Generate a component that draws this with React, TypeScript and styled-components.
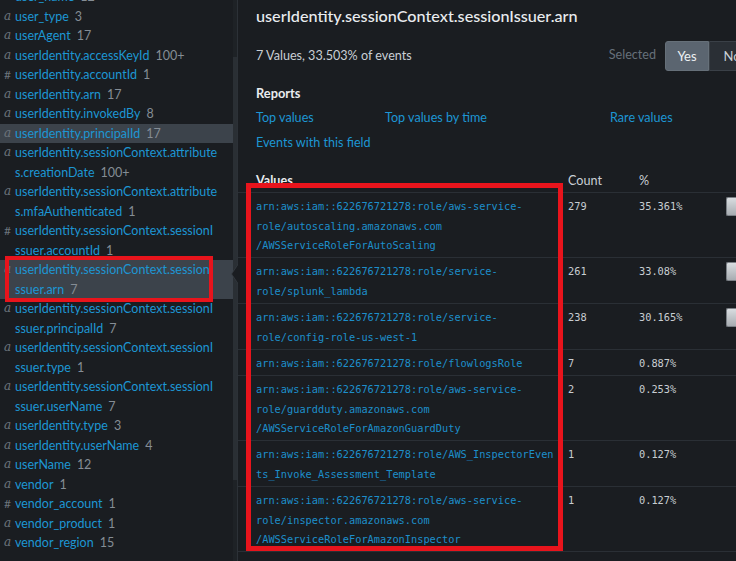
import React from "react";
import styled, { createGlobalStyle } from "styled-components";

const GlobalStyle = createGlobalStyle`
  *, *::before, *::after { box-sizing: border-box; }
  html, body { margin: 0; padding: 0; background: #1a1d21; overflow: hidden; }
  body { font-family: Lato, "Open Sans", sans-serif; }
`;

const SANS = `Lato, "Open Sans", sans-serif`;
const MONO = `"DejaVu Sans Mono", "Liberation Mono", monospace`;
const LINK = "#1d96d3";

const Page = styled.div`
  display: flex;
  width: 736px;
  height: 561px;
  overflow: hidden;
  background: #1a1d21;
`;

/* ---------- sidebar ---------- */
const Sidebar = styled.aside`
  position: relative;
  flex: 0 0 237px;
  display: flex;
  overflow: hidden;
`;

const FieldList = styled.ul`
  list-style: none;
  margin: -13px 0 0;
  padding: 0;
  flex: 1;
`;

const FieldRow = styled.li<{ $active?: boolean }>`
  display: grid;
  grid-template-columns: 15px 1fr;
  font-family: ${SANS};
  font-size: 12.5px;
  line-height: 19.5px;
  background: ${(p) => (p.$active ? "#3c434b" : "transparent")};
`;

const TypeIcon = styled.span<{ $numeric?: boolean }>`
  padding-left: 4px;
  color: #6c747c;
  font-family: ${(p) => (p.$numeric ? SANS : `"DejaVu Serif", serif`)};
  font-style: ${(p) => (p.$numeric ? "normal" : "italic")};
  font-size: 12px;
`;

const FieldText = styled.span`
  white-space: nowrap;
  color: ${LINK};
`;

const FieldCount = styled.span`
  color: #858d95;
  margin-left: 6px;
`;

const ScrollTrack = styled.div`
  flex: 0 0 4px;
  padding-top: 57px;
  background: #1e2226;
`;

const ScrollThumb = styled.div`
  height: 423px;
  background: #2a2f34;
`;

/* ---------- main ---------- */
const Main = styled.main`
  position: relative;
  flex: 0 0 541px;
  border-left: 1px solid #2c3137;
  color: #c3c9cf;
  font-family: ${SANS};
  font-size: 12.6px;
`;

const PopoverArrow = styled.span`
  position: absolute;
  left: -7px;
  top: 264px;
  width: 7px;
  height: 20px;
  &::before,
  &::after {
    content: "";
    position: absolute;
    width: 0;
    height: 0;
    border-style: solid;
    border-color: transparent;
  }
  &::before {
    left: 0;
    top: 0;
    border-width: 10px 7px 10px 0;
    border-right-color: #353b42;
  }
  &::after {
    left: 1px;
    top: 1px;
    border-width: 9px 6px 9px 0;
    border-right-color: #1a1d21;
  }
`;

const Head = styled.section`
  padding: 4px 18px 0;
`;

const Title = styled.h1`
  margin: 0;
  font-size: 16.2px;
  line-height: 24px;
  font-weight: 500;
  color: #e9ecef;
`;

const StatsRow = styled.div`
  display: flex;
  align-items: center;
  justify-content: space-between;
  height: 30px;
  margin-top: 13px;
`;

const StatsText = styled.span`
  color: #c9cfd5;
  margin-top: -1px;
`;

const SelectedBox = styled.div`
  display: flex;
  align-items: center;
  margin-right: 5px;
`;

const SelectedLabel = styled.span`
  color: #66707a;
  margin-right: 9px;
  margin-top: -3px;
`;

const ToggleButton = styled.button<{ $on?: boolean }>`
  height: 30px;
  width: ${(p) => (p.$on ? "44px" : "46px")};
  padding: 0;
  font-family: ${SANS};
  font-size: 13px;
  color: ${(p) => (p.$on ? "#eef1f3" : "#c9cfd5")};
  background: ${(p) => (p.$on ? "#5b6570" : "#2a2f35")};
  border: 1px solid ${(p) => (p.$on ? "#667079" : "#3a4047")};
  border-radius: ${(p) => (p.$on ? "3px 0 0 3px" : "0 3px 3px 0")};
`;

const SectionHeading = styled.h2`
  margin: 13px 0 0;
  font-size: 12.8px;
  line-height: 19.5px;
  font-weight: 700;
  color: #e9ecef;
`;

const LinkGrid = styled.div`
  display: grid;
  grid-template-columns: 129px 225px auto;
  grid-auto-rows: 25px;
  align-items: center;
  margin-top: 1px;
`;

const ReportLink = styled.a`
  color: ${LINK};
  text-decoration: none;
  white-space: nowrap;
`;

const Table = styled.div`
  margin-top: 15px;
`;

const TableRow = styled.div<{ $header?: boolean }>`
  display: grid;
  grid-template-columns: 330px 71px 87px 1fr;
  border-bottom: 1px solid #2a2f35;
  line-height: 19.5px;
  padding: ${(p) => (p.$header ? "1px 0 2px" : "4px 0 1.75px")};
`;

const HeadCell = styled.div<{ $bold?: boolean; $first?: boolean }>`
  padding-left: ${(p) => (p.$first ? "18px" : "0")};
  font-weight: ${(p) => (p.$bold ? 700 : 400)};
  color: ${(p) => (p.$bold ? "#e9ecef" : "#c9cfd5")};
`;

const ValueCell = styled.div`
  padding-left: 18px;
  font-family: ${MONO};
  font-size: 10.3px;
  color: #1d8fcb;
  white-space: nowrap;
`;

const NumCell = styled.div`
  font-family: ${MONO};
  font-size: 10.3px;
  color: #c8cdd2;
`;

const BarCell = styled.div`
  overflow: hidden;
`;

const Bar = styled.div`
  height: 19px;
  background: linear-gradient(#d9dde0, #a7acb1);
  border: 1px solid #7b8086;
  border-right: none;
  border-radius: 2px 0 0 2px;
`;

const Annotation = styled.div<{ $w: number }>`
  position: absolute;
  border: ${(p) => p.$w}px solid #e8141c;
  pointer-events: none;
`;

/* ---------- data ---------- */
type Field = { numeric?: boolean; lines: string[]; count: string; active?: boolean };

const SESS = "userIdentity.sessionContext.sessionI";
const ATTR = "userIdentity.sessionContext.attribute";

const fields: Field[] = [
  { lines: ["user_name"], count: "12" },
  { lines: ["user_type"], count: "3" },
  { lines: ["userAgent"], count: "17" },
  { lines: ["userIdentity.accessKeyId"], count: "100+" },
  { numeric: true, lines: ["userIdentity.accountId"], count: "1" },
  { lines: ["userIdentity.arn"], count: "17" },
  { lines: ["userIdentity.invokedBy"], count: "8" },
  { lines: ["userIdentity.principalId"], count: "17", active: true },
  { lines: [ATTR, "s.creationDate"], count: "100+" },
  { lines: [ATTR, "s.mfaAuthenticated"], count: "1" },
  { numeric: true, lines: [SESS, "ssuer.accountId"], count: "1" },
  { lines: [SESS, "ssuer.arn"], count: "7", active: true },
  { lines: [SESS, "ssuer.principalId"], count: "7" },
  { lines: [SESS, "ssuer.type"], count: "1" },
  { lines: [SESS, "ssuer.userName"], count: "7" },
  { lines: ["userIdentity.type"], count: "3" },
  { lines: ["userIdentity.userName"], count: "4" },
  { lines: ["userName"], count: "12" },
  { lines: ["vendor"], count: "1" },
  { numeric: true, lines: ["vendor_account"], count: "1" },
  { lines: ["vendor_product"], count: "1" },
  { lines: ["vendor_region"], count: "15" },
];

const ARN = "arn:aws:iam::622676721278:role/";

const values: { lines: string[]; count: number; pct: number }[] = [
  { lines: [ARN + "aws-service-", "role/autoscaling.amazonaws.com", "/AWSServiceRoleForAutoScaling"], count: 279, pct: 35.361 },
  { lines: [ARN + "service-", "role/splunk_lambda"], count: 261, pct: 33.08 },
  { lines: [ARN + "service-", "role/config-role-us-west-1"], count: 238, pct: 30.165 },
  { lines: [ARN + "flowlogsRole"], count: 7, pct: 0.887 },
  { lines: [ARN + "aws-service-", "role/guardduty.amazonaws.com", "/AWSServiceRoleForAmazonGuardDuty"], count: 2, pct: 0.253 },
  { lines: [ARN + "AWS_InspectorEven", "ts_Invoke_Assessment_Template"], count: 1, pct: 0.127 },
  { lines: [ARN + "aws-service-", "role/inspector.amazonaws.com", "/AWSServiceRoleForAmazonInspector"], count: 1, pct: 0.127 },
];

const withBreaks = (lines: string[]) =>
  lines.map((l, i) => (
    <React.Fragment key={i}>
      {l}
      {i < lines.length - 1 && <br />}
    </React.Fragment>
  ));

export default function App() {
  return (
    <>
      <GlobalStyle />
      <Page>
        <Sidebar>
          <FieldList>
            {fields.map((f, i) => (
              <FieldRow key={i} $active={f.active}>
                <TypeIcon $numeric={f.numeric}>{f.numeric ? "#" : "a"}</TypeIcon>
                <FieldText>
                  {withBreaks(f.lines)}
                  <FieldCount>{f.count}</FieldCount>
                </FieldText>
              </FieldRow>
            ))}
          </FieldList>
          <ScrollTrack>
            <ScrollThumb />
          </ScrollTrack>
          <Annotation $w={4} style={{ left: 5, top: 256, width: 208, height: 46 }} />
        </Sidebar>

        <Main>
          <PopoverArrow />
          <Head>
            <Title>userIdentity.sessionContext.sessionIssuer.arn</Title>
            <StatsRow>
              <StatsText>7 Values, 33.503% of events</StatsText>
              <SelectedBox>
                <SelectedLabel>Selected</SelectedLabel>
                <ToggleButton $on>Yes</ToggleButton>
                <ToggleButton>No</ToggleButton>
              </SelectedBox>
            </StatsRow>
            <SectionHeading>Reports</SectionHeading>
            <LinkGrid>
              <ReportLink href="#">Top values</ReportLink>
              <ReportLink href="#">Top values by time</ReportLink>
              <ReportLink href="#">Rare values</ReportLink>
              <ReportLink href="#">Events with this field</ReportLink>
            </LinkGrid>
          </Head>

          <Table>
            <TableRow $header>
              <HeadCell $first $bold>Values</HeadCell>
              <HeadCell>Count</HeadCell>
              <HeadCell>%</HeadCell>
              <HeadCell />
            </TableRow>
            {values.map((v, i) => (
              <TableRow key={i}>
                <ValueCell>{withBreaks(v.lines)}</ValueCell>
                <NumCell>{v.count}</NumCell>
                <NumCell>{`${v.pct}%`}</NumCell>
                <BarCell>{v.pct >= 1 && <Bar style={{ width: `${v.pct * 3}px` }} />}</BarCell>
              </TableRow>
            ))}
          </Table>
          <Annotation $w={5} style={{ left: 8, top: 183, width: 317, height: 368 }} />
        </Main>
      </Page>
    </>
  );
}
